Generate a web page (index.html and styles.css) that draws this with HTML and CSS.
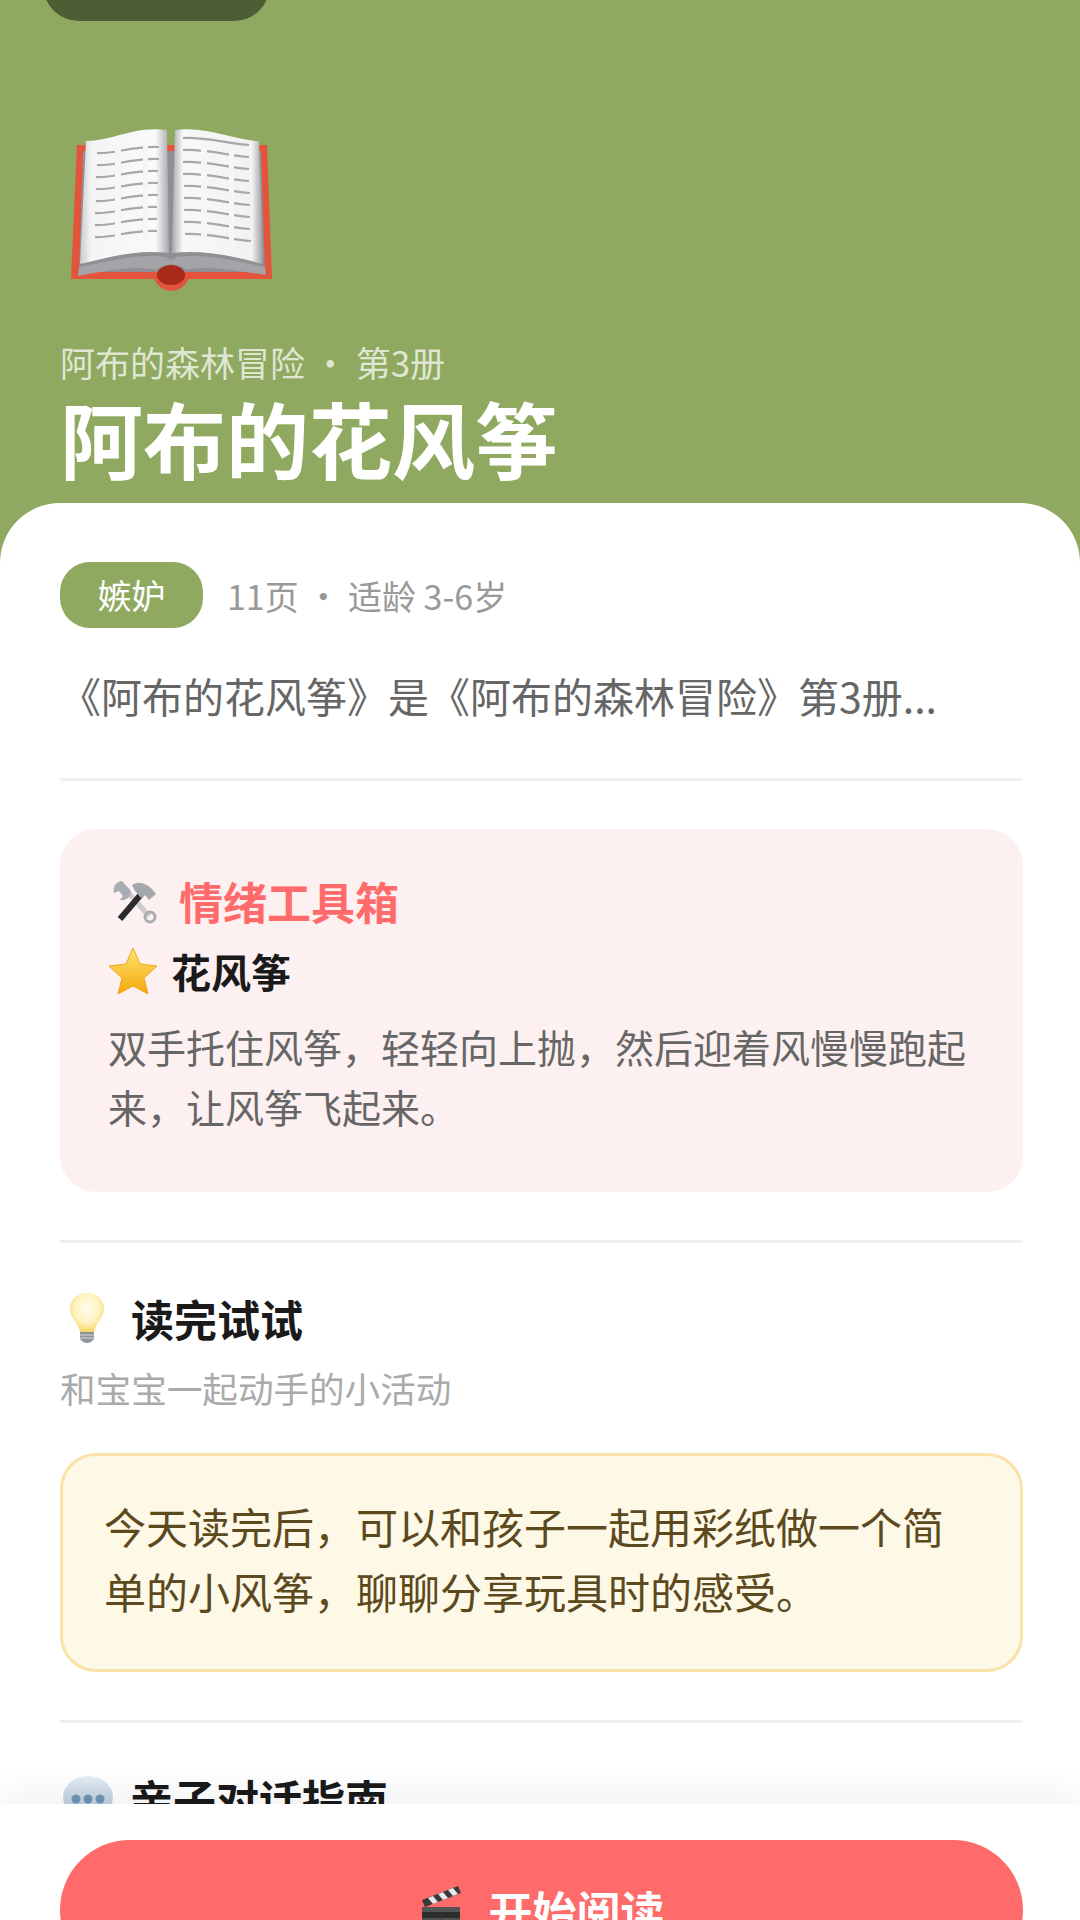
FILE: index.html
```html
<!DOCTYPE html>
<html>
<head>
	<meta charset="utf-8">
	<title>阿布的花风筝</title>
	<link rel="stylesheet" href="styles.css">
</head>
<body>
<div class="page">
	<div class="island"></div>
	<div class="hero">
		<svg class="book" viewBox="0 0 202 164" width="202" height="164">
			<defs>
				<linearGradient id="pageL" x1="0" x2="1" y1="0" y2="0">
					<stop offset="0" stop-color="#c9c9cd"/><stop offset=".12" stop-color="#f4f4f4"/><stop offset=".85" stop-color="#fafafa"/><stop offset="1" stop-color="#a8a8ac"/>
				</linearGradient>
				<linearGradient id="pageR" x1="0" x2="1" y1="0" y2="0">
					<stop offset="0" stop-color="#a8a8ac"/><stop offset=".12" stop-color="#f8f8f8"/><stop offset=".88" stop-color="#f2f2f2"/><stop offset="1" stop-color="#9a9aa0"/>
				</linearGradient>
				<path id="ln" d="M0 0c18 1 34-7 62-6" fill="none" stroke="#a6a8ab" stroke-width="2.2"/>
				<path id="rn" d="M0 0c24-1 42 5 66 7" fill="none" stroke="#a6a8ab" stroke-width="2.2"/>
			</defs>
			<path d="M6 16H196L201 150H118Q111 162 100 162T83 150H0Z" fill="#e4533b"/>
			<path d="M12 22L190 22 194 143H8Z" fill="#8f8f94"/>
			<path d="M8 138C40 132 68 124 96 128Q100 134 105 128C135 124 165 132 194 138L195 146C165 142 135 136 116 141Q100 130 85 141C65 136 35 142 7 147Z" fill="#a4a4a8"/>
			<ellipse cx="100" cy="146" rx="14" ry="10" fill="#a82a1b"/>
			<path d="M15 12C42 12 62-3 96 1L98 124C65 120 40 128 9 135Z" fill="url(#pageL)"/>
			<path d="M104 1C138-3 165 12 188 12L192 135C165 128 135 120 101 124Z" fill="url(#pageR)"/>
			<g>
				<use href="#ln" x="26" y="24"/><use href="#ln" x="26" y="36"/><use href="#ln" x="25" y="48"/>
				<use href="#ln" x="25" y="60"/><use href="#ln" x="25" y="72"/><use href="#ln" x="24" y="84"/>
				<use href="#ln" x="24" y="96"/><use href="#ln" x="24" y="108"/>
				<use href="#rn" x="112" y="9"/><use href="#rn" x="112" y="21"/><use href="#rn" x="112" y="33"/>
				<use href="#rn" x="112" y="45"/><use href="#rn" x="113" y="57"/><use href="#rn" x="113" y="69"/>
				<use href="#rn" x="113" y="81"/><use href="#rn" x="113" y="93"/><use href="#rn" x="114" y="105"/>
			</g>
			<g fill="#f6f6f6">
				<rect x="44" y="20" width="6" height="100"/><rect x="72" y="14" width="5" height="100"/>
				<rect x="130" y="16" width="6" height="100"/><rect x="158" y="20" width="5" height="100"/>
			</g>
		</svg>
		<div class="series">阿布的森林冒险 · 第3册</div>
		<h1 class="title">阿布的花风筝</h1>
	</div>

	<div class="sheet">
		<div class="meta">
			<span class="tag">嫉妒</span>
			<span class="meta-text">11页 · 适龄 3-6岁</span>
		</div>
		<p class="desc">《阿布的花风筝》是《阿布的森林冒险》第3册...</p>
		<div class="rule"></div>

		<div class="tools">
			<div class="tools-head">
				<svg class="ico-tools" viewBox="0 0 46 46" width="46" height="46">
					<path d="M37 38L13 11" stroke="#c9ccd0" stroke-width="5"/>
					<path d="M10 3a9 9 0 0 0-8 12l5-2 4 5-3 4a9 9 0 0 0 11-9z" fill="#a9adb2"/>
					<circle cx="38" cy="39" r="5" fill="none" stroke="#a9adb2" stroke-width="3"/>
					<path d="M8 41L31 14" stroke="#2b2b2b" stroke-width="6"/>
					<path d="M20 7Q32 0 44 16L37 22 33 17 29 20 23 13Z" fill="#a4a8ad"/>
				</svg>
				<span>情绪工具箱</span>
			</div>
			<div class="tool-name">
				<svg class="ico-star" viewBox="0 0 50 48" width="50" height="48">
					<defs><linearGradient id="star" x1="0" x2="0" y1="0" y2="1"><stop offset="0" stop-color="#ffe470"/><stop offset="1" stop-color="#f5a70c"/></linearGradient></defs>
					<path d="M25 1L32 17 49 19 36 31 40 47 25 39 10 47 14 31 1 19 18 17Z" fill="url(#star)" stroke="#eda917" stroke-width="1" stroke-linejoin="round"/>
				</svg>
				<span>花风筝</span>
			</div>
			<p class="tool-text">双手托住风筝，轻轻向上抛，然后迎着风慢慢跑起来，让风筝飞起来。</p>
		</div>
		<div class="rule rule-b"></div>

		<div class="sec-head">
			<svg class="ico-bulb" viewBox="0 0 40 52" width="40" height="52">
				<defs><radialGradient id="bulb" cx=".5" cy=".4" r=".6"><stop offset="0" stop-color="#fffdf2"/><stop offset=".6" stop-color="#fff3c0"/><stop offset="1" stop-color="#f6d766"/></radialGradient></defs>
				<path d="M20 1C9 1 3 9 3 17 3 26 11 30 13 40H27C29 30 37 26 37 17 37 9 31 1 20 1Z" fill="url(#bulb)"/>
				<path d="M13 40H27V47Q24 51 20 51T13 47Z" fill="#8f949a"/>
				<path d="M13 43H27M13 46H27" stroke="#d6d8da" stroke-width="1.2"/>
			</svg>
			<span>读完试试</span>
		</div>
		<div class="sec-sub">和宝宝一起动手的小活动</div>
		<div class="tip">今天读完后，可以和孩子一起用彩纸做一个简单的小风筝，聊聊分享玩具时的感受。</div>
		<div class="rule rule-c"></div>

		<div class="sec-head sec-talk">
			<svg class="ico-bubble" viewBox="0 0 52 46" width="52" height="46">
				<defs><linearGradient id="bub" x1="0" x2="0" y1="0" y2="1"><stop offset="0" stop-color="#e6edf3"/><stop offset="1" stop-color="#a9c1d6"/></linearGradient></defs>
				<ellipse cx="26" cy="22" rx="25" ry="21" fill="url(#bub)"/>
				<circle cx="14" cy="24" r="4.5" fill="#6f94b5"/><circle cx="26" cy="24" r="4.5" fill="#6f94b5"/><circle cx="38" cy="24" r="4.5" fill="#6f94b5"/>
			</svg>
			<span>亲子对话指南</span>
		</div>
	</div>

	<div class="bottom">
		<div class="read-btn">
			<svg class="ico-clap" viewBox="0 0 44 50" width="44" height="50">
				<path d="M3 15L39 1 42 8 6 22Z" fill="#3a3a3a"/>
				<path d="M9 13l5 6 5-2-5-6zM19 9l5 6 5-2-5-6zM29 5l5 6 5-2-5-6z" fill="#e8e8e8"/>
				<rect x="3" y="22" width="38" height="28" fill="#2e2e2e"/>
				<path d="M3 22H41V27H3Z" fill="#555"/>
				<path d="M3 34H41M16 34V50M28 34V50" stroke="#777" stroke-width="1"/>
			</svg>
			<span>开始阅读</span>
		</div>
	</div>
</div>
</body>
</html>
```

FILE: styles.css
```css
*{box-sizing:border-box;}
html,body{margin:0;padding:0;}
body{width:1080px;height:1920px;overflow:hidden;background:#fff;font-family:"Noto Sans CJK SC","Noto Sans",sans-serif;}
.page{position:relative;width:1080px;height:1920px;overflow:hidden;}

.island{position:absolute;left:43px;top:-60px;width:227px;height:81px;border-radius:36px;background:#4f5d35;}

.hero{height:563px;padding:129px 60px 0;background:#8fa961;}
.book{display:block;margin-left:11px;}
.series{margin-top:47px;font-size:35px;line-height:44px;color:rgba(255,255,255,.72);}
.title{margin:3px 0 0;font-size:83px;line-height:100px;font-weight:700;color:#fff;}

.sheet{margin-top:-60px;height:1300px;padding:59px 57px 0 60px;background:#fff;border-radius:60px 60px 0 0;}
.meta{display:flex;align-items:center;gap:24px;}
.tag{width:143px;height:66px;border-radius:30px;background:#8fa961;color:#fff;font-size:34px;line-height:66px;text-align:center;}
.meta-text{font-size:34px;color:#999;}
.desc{margin:32px 0 0;font-size:41px;line-height:70px;color:#666;white-space:nowrap;}
.rule{height:3px;margin-top:48px;background:#f0f0f0;}

.tools{margin-top:48px;height:363px;padding:39px 48px 0;border-radius:36px;background:#fdf0f0;}
.tools-head{display:flex;align-items:center;gap:21px;padding-left:4px;font-size:44px;line-height:66px;font-weight:700;color:#ff6b6b;}
.tool-name{display:flex;align-items:center;gap:13px;margin-top:8px;font-size:40px;line-height:58px;font-weight:700;color:#1a1a1a;}
.tool-text{margin:16px 0 0;font-size:39px;line-height:60px;color:#666;}
.rule-b{margin-top:48px;}

.sec-head{display:flex;align-items:center;gap:24px;margin-top:44px;padding-left:7px;font-size:43px;line-height:62px;font-weight:700;color:#1a1a1a;}
.sec-sub{margin-top:16px;font-size:35.6px;line-height:46px;color:#aaa;}
.tip{margin-top:42px;height:219px;padding:37px 40px 0 41px;border:3px solid #f9e3a9;border-radius:36px;background:#fef8e7;font-size:42px;line-height:65px;color:#5c4a1e;}
.rule-c{margin-top:48px;}
.sec-talk{margin-top:44px;padding-left:2px;gap:16px;}

.bottom{position:absolute;left:0;right:0;top:1804px;height:200px;padding:36px 57px 0 60px;background:#fff;box-shadow:0 -14px 30px rgba(0,0,0,.05);}
.read-btn{display:flex;align-items:center;justify-content:center;gap:26px;height:140px;border-radius:70px;background:#ff6b6b;color:#fff;font-size:44px;font-weight:700;}
```
